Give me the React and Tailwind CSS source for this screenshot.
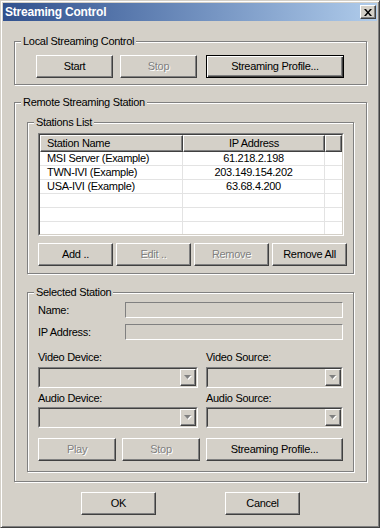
const raised =
  "border border-t-white border-l-white border-r-[#404040] border-b-[#404040] shadow-[inset_-1px_-1px_#808080]";
const sunken = "border border-t-[#808080] border-l-[#808080] border-r-white border-b-white";

function Button({ children, disabled, primary, className = "" }) {
  const frame = primary
    ? "border border-black shadow-[inset_1px_1px_#fff,inset_-1px_-1px_#404040,inset_-2px_-2px_#808080]"
    : raised;
  const text = disabled ? "text-[#808080] [text-shadow:1px_1px_0_#fff]" : "text-black";
  return (
    <button
      type="button"
      disabled={disabled}
      className={`flex h-[23px] shrink-0 items-center justify-center bg-[#d4d0c8] leading-[13px] ${frame} ${text} ${className}`}
    >
      {children}
    </button>
  );
}

function Group({ label, className = "", inner = "", children }) {
  return (
    <fieldset className={`min-w-0 border border-[#808080] shadow-[inset_1px_1px_#fff,1px_1px_#fff] ${className}`}>
      <legend className="ml-[6px] bg-[#d4d0c8] px-[2px] leading-[13px]">{label}</legend>
      <div className={inner}>{children}</div>
    </fieldset>
  );
}

function Combo({ className = "" }) {
  return (
    <div className={`flex h-[21px] ${sunken} ${className}`}>
      <div className="flex flex-1 justify-end border border-t-[#404040] border-l-[#404040] border-r-[#d4d0c8] border-b-[#d4d0c8]">
        <div className={`flex w-[16px] items-center justify-center bg-[#d4d0c8] ${raised}`}>
          <svg width="8" height="5" viewBox="0 0 8 5">
            <path d="M1 1h7L4.5 5z" fill="#fff" />
            <path d="M0 0h7L3.5 4z" fill="#808080" />
          </svg>
        </div>
      </div>
    </div>
  );
}

const stations = [
  ["MSI Server (Example)", "61.218.2.198"],
  ["TWN-IVI (Example)", "203.149.154.202"],
  ["USA-IVI (Example)", "63.68.4.200"],
  ["", ""],
  ["", ""],
  ["", ""],
];

export default function App() {
  return (
    <div className="flex h-[528px] w-[380px] flex-col border border-t-[#d4d0c8] border-l-[#d4d0c8] border-r-[#404040] border-b-[#404040] bg-[#d4d0c8] p-[2px] font-['Liberation_Sans',Arial,sans-serif] text-[11px] tracking-[-0.3px] text-black shadow-[inset_1px_1px_#fff,inset_-1px_-1px_#808080]">
      <div className="flex h-[18px] shrink-0 items-center bg-linear-to-r from-[#31518e] to-[#b0cceb] pl-[2px] pr-[1px]">
        <span className="flex-1 text-[12px] font-bold leading-[14px] tracking-[-0.2px] text-white">Streaming Control</span>
        <button type="button" className={`flex h-[14px] w-[16px] items-center justify-center bg-[#d4d0c8] ${raised}`}>
          <svg width="8" height="7" viewBox="0 0 8 7">
            <path d="M0 0h2l2 2.5L6 0h2L5 3.5 8 7H6L4 4.5 2 7H0l3-3.5z" fill="#000" />
          </svg>
        </button>
      </div>

      <div className="flex flex-1 flex-col pl-[11px] pr-[10px]">
        <Group label="Local Streaming Control" className="mt-[14px]" inner="flex pl-[21px] pt-[7px] pb-[6px]">
          <Button className="w-[77px]">Start</Button>
          <Button disabled className="ml-[7px] w-[77px]">Stop</Button>
          <Button primary className="ml-[9px] w-[138px]">Streaming Profile...</Button>
        </Group>

        <Group label="Remote Streaming Station" className="mt-[11px]" inner="px-[12px] pt-[7px] pb-[9px]">
          <Group label="Stations List" inner="pl-[10px] pr-[9px] pt-[4px] pb-[7px]">
            <div className="h-[103px] overflow-hidden border border-t-[#808080] border-l-[#808080] border-r-white border-b-white">
              <div className="h-full overflow-hidden border border-t-[#404040] border-l-[#404040] border-r-[#d4d0c8] border-b-[#d4d0c8] bg-white">
                <div className="flex h-[17px]">
                  <div className={`flex w-[143px] items-center bg-[#d4d0c8] pl-[6px] leading-[13px] ${raised}`}>Station Name</div>
                  <div className={`flex w-[142px] items-center justify-center bg-[#d4d0c8] leading-[13px] ${raised}`}>IP Address</div>
                  <div className={`flex-1 bg-[#d4d0c8] ${raised}`} />
                </div>
                {stations.map(([name, ip], i) => (
                  <div key={i} className="flex h-[14px] border-b border-[#e3e3e3] leading-[13px]">
                    <div className="w-[143px] border-r border-[#e3e3e3] pl-[7px]">{name}</div>
                    <div className="w-[142px] border-r border-[#e3e3e3] text-center">{ip}</div>
                    <div className="flex-1" />
                  </div>
                ))}
              </div>
            </div>
            <div className="mt-[7px] flex gap-[3px]">
              <Button className="w-[75px]">Add ..</Button>
              <Button disabled className="w-[75px]">Edit ..</Button>
              <Button disabled className="w-[75px]">Remove</Button>
              <Button className="w-[75px]">Remove All</Button>
            </div>
          </Group>

          <Group label="Selected Station" className="mt-[12px]" inner="px-[10px] pt-[3px] pb-[10px]">
            <div className="flex h-[16px] items-center">
              <span className="w-[87px] leading-[13px]">Name:</span>
              <div className={`h-[16px] flex-1 ${sunken}`} />
            </div>
            <div className="mt-[6px] flex h-[16px] items-center">
              <span className="w-[87px] leading-[13px]">IP Address:</span>
              <div className={`h-[16px] flex-1 ${sunken}`} />
            </div>
            <div className="mt-[11px] grid grid-cols-[160px_137px] gap-x-[8px] leading-[13px]">
              <span>Video Device:</span>
              <span>Video Source:</span>
              <Combo className="mt-[3px]" />
              <Combo className="mt-[3px]" />
              <span className="mt-[4px]">Audio Device:</span>
              <span className="mt-[4px]">Audio Source:</span>
              <Combo className="mt-[2px]" />
              <Combo className="mt-[2px]" />
            </div>
            <div className="mt-[10px] flex">
              <Button disabled className="w-[78px]">Play</Button>
              <Button disabled className="ml-[6px] w-[78px]">Stop</Button>
              <Button className="ml-[6px] w-[137px]">Streaming Profile...</Button>
            </div>
          </Group>
        </Group>

        <div className="mt-[10px] flex justify-center gap-[69px]">
          <Button className="w-[75px]">OK</Button>
          <Button className="w-[75px]">Cancel</Button>
        </div>
      </div>
    </div>
  );
}
